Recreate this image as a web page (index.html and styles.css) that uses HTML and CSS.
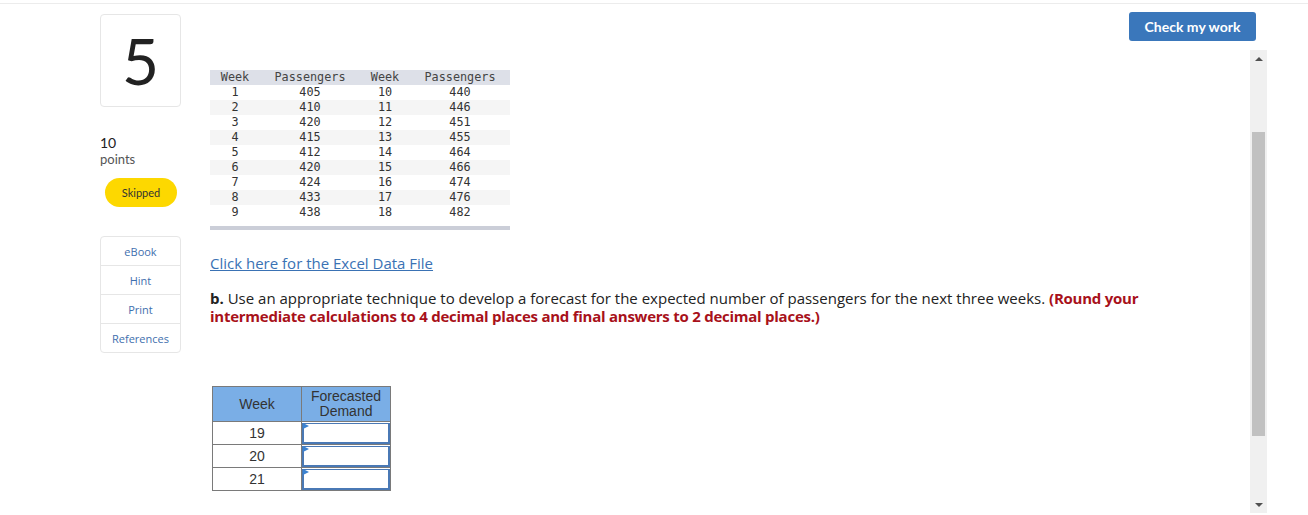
FILE: index.html
```html
<!DOCTYPE html>
<html>
<head>
<meta charset="utf-8">
<link rel="stylesheet" href="styles.css">
</head>
<body>
<div class="topline"></div>
<div class="page">
  <aside class="sidebar">
    <div class="qnum">5</div>
    <div class="points"><div class="pts-num">10</div><div class="pts-label">points</div></div>
    <div class="status">Skipped</div>
    <div class="tools">
      <div class="tool">eBook</div>
      <div class="tool">Hint</div>
      <div class="tool">Print</div>
      <div class="tool">References</div>
    </div>
  </aside>
  <main class="main">
    <div class="actions"><button class="check">Check my work</button></div>
    <div class="panel">
      <div class="content">
        <table class="data">
          <colgroup><col class="cw"><col class="cp"><col class="cw"><col class="cp"></colgroup>
          <thead><tr><th>Week</th><th>Passengers</th><th>Week</th><th>Passengers</th></tr></thead>
          <tbody>
            <tr><td>1</td><td>405</td><td>10</td><td>440</td></tr>
            <tr><td>2</td><td>410</td><td>11</td><td>446</td></tr>
            <tr><td>3</td><td>420</td><td>12</td><td>451</td></tr>
            <tr><td>4</td><td>415</td><td>13</td><td>455</td></tr>
            <tr><td>5</td><td>412</td><td>14</td><td>464</td></tr>
            <tr><td>6</td><td>420</td><td>15</td><td>466</td></tr>
            <tr><td>7</td><td>424</td><td>16</td><td>474</td></tr>
            <tr><td>8</td><td>433</td><td>17</td><td>476</td></tr>
            <tr><td>9</td><td>438</td><td>18</td><td>482</td></tr>
          </tbody>
        </table>
        <div class="data-bar"></div>
        <p class="link-line"><a class="excel" href="#">Click here for the Excel Data File</a></p>
        <p class="question"><span class="q1"><b>b.</b> Use an appropriate technique to develop a forecast for the expected number of passengers for the next three weeks. <strong class="note">(Round your</strong></span><br><strong class="note">intermediate calculations to 4 decimal places and final answers to 2 decimal places.)</strong></p>
        <table class="answer">
          <thead><tr><th class="c-week">Week</th><th class="c-fc">Forecasted<br>Demand</th></tr></thead>
          <tbody>
            <tr><td>19</td><td class="in"><div class="box"></div></td></tr>
            <tr><td>20</td><td class="in"><div class="box"></div></td></tr>
            <tr><td>21</td><td class="in"><div class="box"></div></td></tr>
          </tbody>
        </table>
      </div>
      <div class="scrollbar">
        <div class="arrow up"></div>
        <div class="track"><div class="thumb"></div></div>
        <div class="arrow down"></div>
      </div>
    </div>
  </main>
</div>
</body>
</html>
```
FILE: styles.css
```css
html, body { margin: 0; padding: 0; background: #fff; }
body { font-family: "Open Sans", "Lato", sans-serif; color: #222; overflow: hidden; }
.topline { height: 3px; border-bottom: 1px solid #ececec; }
.page { display: flex; padding-left: 100px; height: 511px; }
.sidebar { width: 81px; flex: none; padding-top: 10px; }
.qnum {
  height: 91px; border: 1px solid #e6e6e6; border-radius: 4px;
  display: flex; align-items: center; justify-content: center;
  font-family: "Lato", sans-serif; font-size: 64px; font-weight: 400; color: #222; line-height: 1;
}
.points { margin-top: 28px; line-height: 16px; font-family: "Lato", sans-serif; }
.pts-num { font-size: 14px; color: #222; }
.pts-label { font-size: 13px; color: #555; }
.status {
  margin: 11px 0 0 5px; width: 72px; height: 29px; border-radius: 15px;
  background: #fdd800; font-size: 11px; color: #333; font-family: "Lato", sans-serif;
  display: flex; align-items: center; justify-content: center;
}
.tools { margin-top: 29px; border: 1px solid #e6e6e6; border-radius: 4px; }
.tool {
  height: 28px; display: flex; align-items: center; justify-content: center;
  font-size: 11px; color: #3f6fae; border-top: 1px solid #e6e6e6;
}
.tool:first-child { border-top: none; }
.main { margin-left: 29px; width: 1057px; display: flex; flex-direction: column; }
.actions { display: flex; justify-content: flex-end; padding: 8px 11px 0 0; height: 38px; }
.check {
  width: 127px; height: 29px; border: none; border-radius: 3px; background: #3a77bb;
  color: #fff; font-family: "Lato", sans-serif; font-weight: 700; font-size: 14px; padding: 0;
}
.panel { display: flex; height: 463px; }
.content { flex: 1; padding-top: 20px; }
.data {
  border-collapse: collapse; width: 300px; table-layout: fixed;
  font-family: "DejaVu Sans Mono", monospace; font-size: 11.8px; color: #333;
}
.cw { width: 50px; }
.cp { width: 100px; }
.data th, .data td { height: 15px; padding: 0; text-align: center; font-weight: 400; line-height: 15px; }
.data th { background: #dde0e8; color: #444; }
.data tbody tr:nth-child(even) td { background: #f5f5f5; }
.data-bar { width: 300px; height: 4px; background: #cbced8; margin-top: 6px; }
.link-line { margin: 24px 0 0; font-size: 15px; line-height: 18px; }
.excel { color: #3a72b4; text-decoration: underline; }
.question { margin: 17px 0 0; width: 960px; font-size: 15px; line-height: 18px; color: #222; }
.question b { font-weight: 700; }
.note { color: #a8111a; font-weight: 700; letter-spacing: -0.25px; }
.answer {
  margin: 61px 0 0 2px; border-collapse: collapse; table-layout: fixed; width: 179px;
  font-family: "Liberation Sans", Arial, sans-serif; font-size: 14px; color: #333;
}
.answer th, .answer td { border: 1px solid #7a7a7a; padding: 0; text-align: center; }
.answer th { background: #7aaee6; font-weight: 400; height: 34px; line-height: 15px; }
.c-week { width: 88px; }
.answer td { height: 22px; }
.answer td.in { position: relative; padding: 0; }
.box { height: 18px; border: 2px solid #4a79b5; border-top-width: 1px; }
.answer td.in::before {
  content: ""; position: absolute; left: 1px; top: 1px;
  border-left: 6px solid #3b82d0; border-top: 3px solid transparent; border-bottom: 3px solid transparent;
}
.scrollbar { width: 17px; background: #f0f0f0; display: flex; flex-direction: column; }
.arrow { height: 17px; display: flex; align-items: center; justify-content: center; }
.arrow::after { content: ""; border-left: 4px solid transparent; border-right: 4px solid transparent; }
.up::after { border-bottom: 4px solid #505050; }
.down::after { border-top: 4px solid #505050; }
.track { flex: 1; }
.thumb { margin: 65px 2px 0; height: 304px; background: #c1c1c1; }
```
